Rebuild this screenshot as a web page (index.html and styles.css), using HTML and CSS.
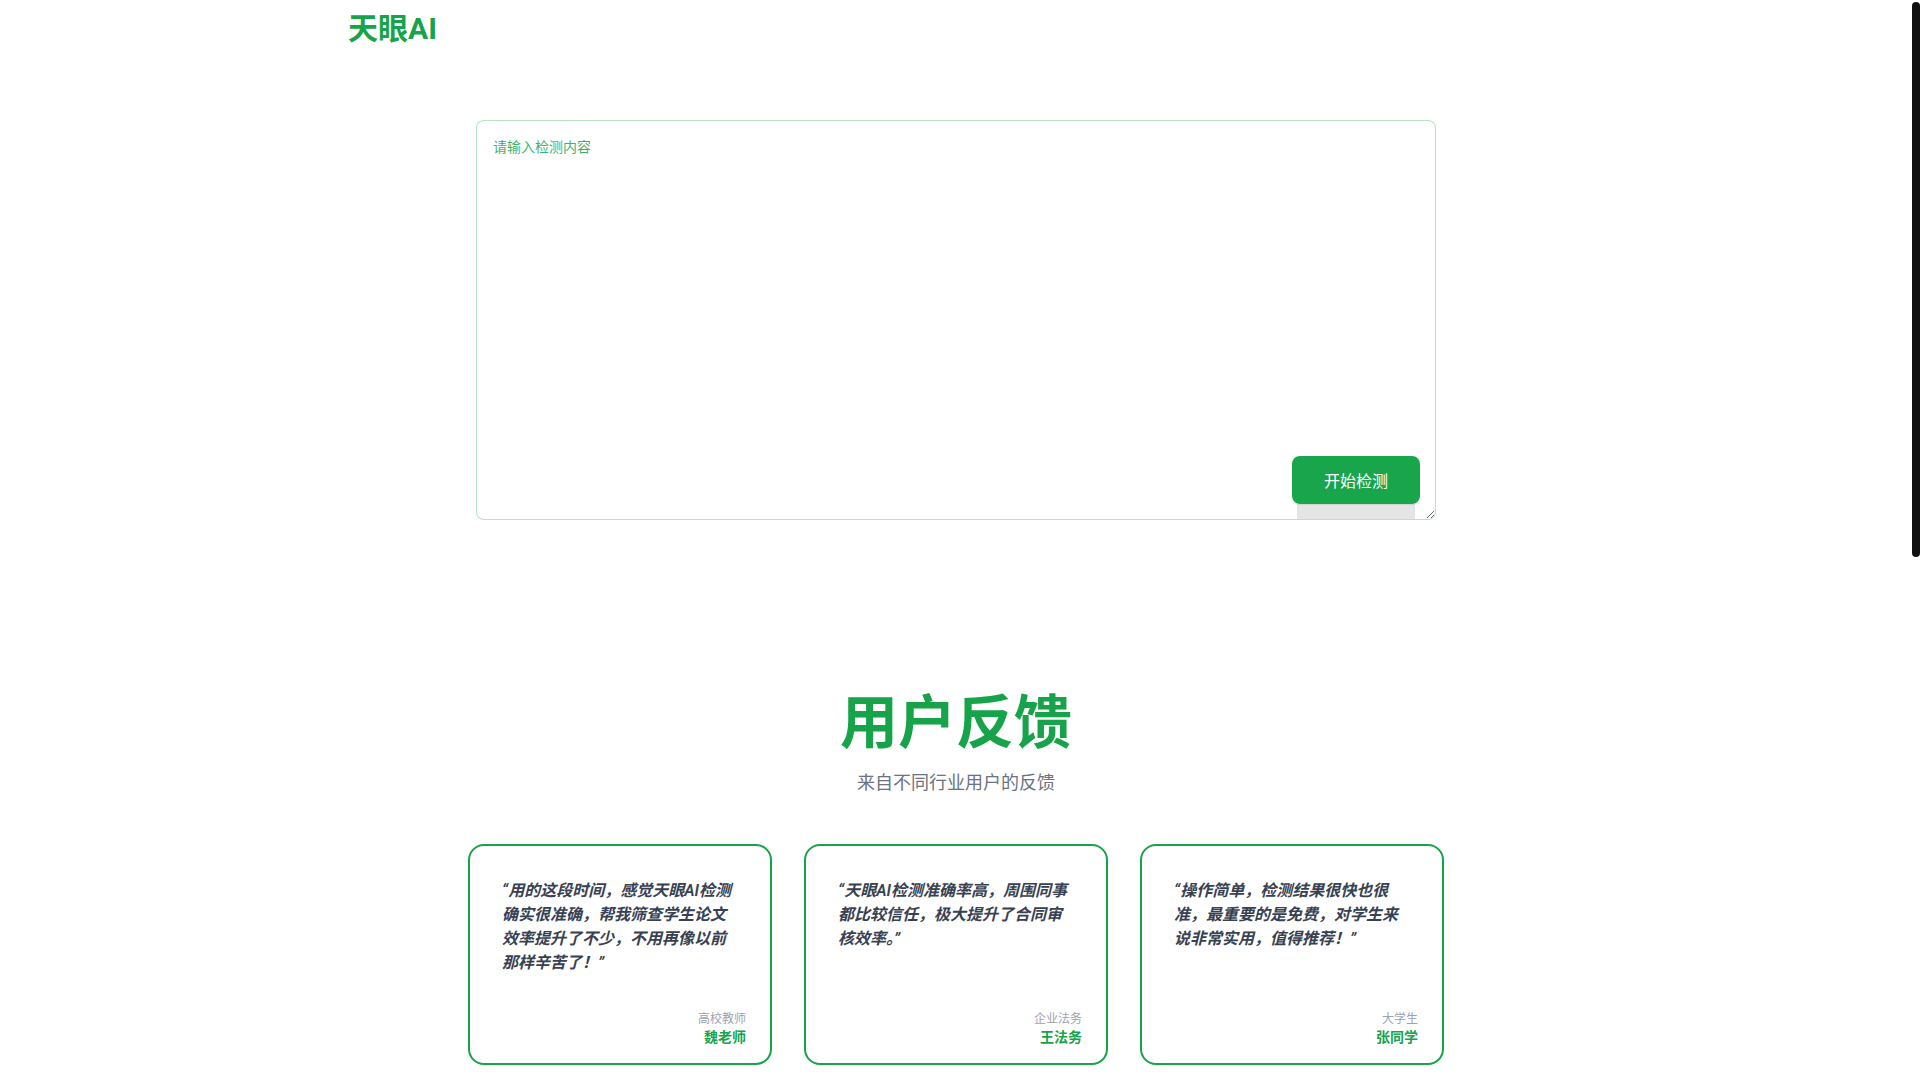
FILE: index.html
```html
<!DOCTYPE html>
<html lang="zh-CN">
<head>
<meta charset="utf-8">
<title>天眼AI</title>
<link rel="stylesheet" href="styles.css">
</head>
<body>
<header class="header">
  <div class="logo">天眼AI</div>
</header>
<main>
  <section class="detector">
    <textarea class="input" placeholder="请输入检测内容"></textarea>
    <div class="btn-shadow"></div>
    <button class="btn">开始检测</button>
  </section>
  <section class="feedback">
    <h2 class="title">用户反馈</h2>
    <p class="subtitle">来自不同行业用户的反馈</p>
    <div class="cards">
      <div class="card">
        <p class="quote">“用的这段时间，感觉天眼AI检测确实很准确，帮我筛查学生论文效率提升了不少，不用再像以前那样辛苦了！”</p>
        <div class="meta">
          <div class="role">高校教师</div>
          <div class="name">魏老师</div>
        </div>
      </div>
      <div class="card">
        <p class="quote">“天眼AI检测准确率高，周围同事都比较信任，极大提升了合同审核效率。”</p>
        <div class="meta">
          <div class="role">企业法务</div>
          <div class="name">王法务</div>
        </div>
      </div>
      <div class="card">
        <p class="quote">“操作简单，检测结果很快也很准，最重要的是免费，对学生来说非常实用，值得推荐！”</p>
        <div class="meta">
          <div class="role">大学生</div>
          <div class="name">张同学</div>
        </div>
      </div>
    </div>
  </section>
</main>
<div class="scroll-thumb" aria-hidden="true"></div>
</body>
</html>
```
FILE: styles.css
```css
html {
  background: #fff;
  scrollbar-width: none;
}
body {
  margin: 0 8px 0 0;
  font-family: "Noto Sans CJK SC", "Noto Sans", sans-serif;
  color: #111827;
  background: #fff;
}
.scroll-thumb {
  position: fixed;
  top: 2px;
  right: 0;
  width: 8px;
  height: 555px;
  background: #111;
  border-radius: 4px;
}
.header {
  box-sizing: border-box;
  max-width: 1280px;
  margin: 0 auto;
  padding: 11px 32px 9px;
}
.logo {
  font-family: Roboto, "Noto Sans CJK SC", sans-serif;
  font-size: 30px;
  line-height: 36px;
  font-weight: 700;
  color: #16a34a;
}
.detector {
  position: relative;
  width: 960px;
  height: 400px;
  margin: 64px auto 0;
}
.input {
  display: block;
  width: 100%;
  height: 400px;
  box-sizing: border-box;
  margin: 0;
  padding: 15px 16px 16px;
  border: 1px solid rgba(22, 163, 74, 0.3);
  border-radius: 8px;
  font-family: "Noto Sans CJK SC", "Noto Sans", sans-serif;
  font-size: 14px;
  line-height: 20px;
  color: #111827;
  outline: none;
  background: #fff;
}
.input::placeholder {
  color: rgba(22, 163, 74, 0.85);
}
.btn-shadow {
  position: absolute;
  right: 21px;
  bottom: 1px;
  width: 118px;
  height: 15px;
  background: #e5e5e5;
  border-top: 1px solid #d2d2d2;
  box-sizing: border-box;
}
.btn {
  position: absolute;
  right: 16px;
  bottom: 16px;
  width: 128px;
  height: 48px;
  border: none;
  border-radius: 8px;
  background: #18a54b;
  color: #fff;
  font-family: "Noto Sans CJK SC", "Noto Sans", sans-serif;
  font-size: 16px;
  cursor: pointer;
}
.feedback {
  padding: 168px 0 1034px;
  text-align: center;
}
.title {
  margin: 0 0 19px;
  font-size: 58px;
  line-height: 60px;
  font-weight: 700;
  color: #16a34a;
}
.subtitle {
  margin: 0;
  font-size: 18px;
  line-height: 28px;
  color: #6b7280;
}
.cards {
  width: 976px;
  margin: 49px auto 0;
  display: grid;
  grid-template-columns: repeat(3, 1fr);
  gap: 32px;
  text-align: left;
}
.card {
  display: flex;
  flex-direction: column;
  border: 2px solid #16a34a;
  border-radius: 16px;
  padding: 24px 24px 17px;
}
.quote {
  margin: 0 0 28px;
  padding: 9px 8px 7px;
  font-family: Roboto, "Noto Sans CJK SC", sans-serif;
  font-size: 16px;
  line-height: 24px;
  font-style: italic;
  font-weight: 600;
  color: #374151;
}
.meta {
  margin-top: auto;
  text-align: right;
}
.role {
  font-size: 12px;
  line-height: 16px;
  color: #9ca3af;
}
.name {
  font-size: 14px;
  line-height: 20px;
  font-weight: 700;
  color: #16a34a;
}
```
